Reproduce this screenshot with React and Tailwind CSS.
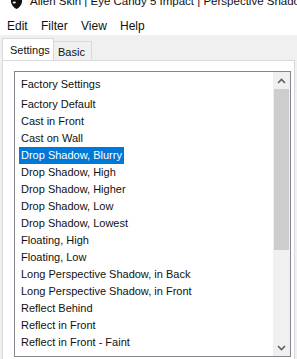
import React from "react";

const presets = [
  "Factory Default",
  "Cast in Front",
  "Cast on Wall",
  "Drop Shadow, Blurry",
  "Drop Shadow, High",
  "Drop Shadow, Higher",
  "Drop Shadow, Low",
  "Drop Shadow, Lowest",
  "Floating, High",
  "Floating, Low",
  "Long Perspective Shadow, in Back",
  "Long Perspective Shadow, in Front",
  "Reflect Behind",
  "Reflect in Front",
  "Reflect in Front - Faint",
];

function Chevron({ up }) {
  return (
    <svg width="9" height="6" viewBox="0 0 9 6" className="block">
      <path
        d={up ? "M1 5 L4.5 1.5 L8 5" : "M1 1 L4.5 4.5 L8 1"}
        fill="none"
        stroke="#606060"
        strokeWidth="1.6"
      />
    </svg>
  );
}

export default function App() {
  const selected = "Drop Shadow, Blurry";

  return (
    <div className="w-[297px] h-[359px] overflow-hidden bg-white text-[#111] font-['Liberation_Sans',Arial,sans-serif] text-[11px]">
      {/* title bar, mostly scrolled off the top */}
      <div className="h-[14px] overflow-hidden">
        <div className="flex items-center -mt-[8px] h-[20px] pl-[10px] whitespace-nowrap">
          <svg width="13" height="16" viewBox="0 0 13 16" className="shrink-0">
            <path d="M6.5 1 C10.5 1 12.5 4 12 8 C11.5 11 9 14 6.5 15 C4 14 1.5 11 1 8 C0.5 4 2.5 1 6.5 1 Z" fill="#111" />
            <ellipse cx="4.3" cy="8.5" rx="1.6" ry="1" fill="#fff" />
          </svg>
          <span className="ml-[7px] text-[11.5px]">Alien Skin | Eye Candy 5 Impact | Perspective Shadow</span>
        </div>
      </div>

      {/* menu bar */}
      <div className="flex items-start h-[21px] pt-[6px] pl-[7px] text-[12px] leading-[13px]">
        <span className="w-[34px]">Edit</span>
        <span className="w-[40px]">Filter</span>
        <span className="w-[39px]">View</span>
        <span>Help</span>
      </div>

      {/* tab area */}
      <div className="bg-[#f0f0f0] pt-[4px] h-full">
        <div className="flex items-end h-[21px] pl-[2px] relative z-10">
          <div className="h-[22px] w-[52px] pl-[7px] pt-[3px] bg-white border border-[#d9d9d9] border-b-0">Settings</div>
          <div className="h-[18px] w-[38px] pl-[4px] pt-[2px] border border-l-0 border-[#d9d9d9] border-b-0 mb-[1px]">Basic</div>
        </div>
        <div className="ml-[2px] mr-[2px] bg-white border border-[#d9d9d9] h-full pt-[10px] pl-[11px] pr-[3px]">
          <div className="w-[277px] h-[286px] border border-[#828790] flex">
            <div className="flex-1 pl-[4px]">
              <div className="h-[24px] pt-[4px] pl-[2px]">Factory Settings</div>
              {presets.map((p) => (
                <div key={p} className="h-[17px] flex items-center">
                  <span
                    className={
                      p === selected
                        ? "px-[2px] h-[17px] flex items-center bg-[#0078d7] text-white whitespace-nowrap"
                        : "px-[2px] whitespace-nowrap"
                    }
                  >
                    {p}
                  </span>
                </div>
              ))}
            </div>
            <div className="w-[17px] bg-[#f0f0f0] flex flex-col">
              <div className="h-[17px] flex items-center justify-center">
                <Chevron up />
              </div>
              <div className="h-[161px] mx-[1px] bg-[#cdcdcd]" />
              <div className="flex-1" />
              <div className="h-[17px] flex items-center justify-center">
                <Chevron />
              </div>
            </div>
          </div>
        </div>
      </div>
    </div>
  );
}
